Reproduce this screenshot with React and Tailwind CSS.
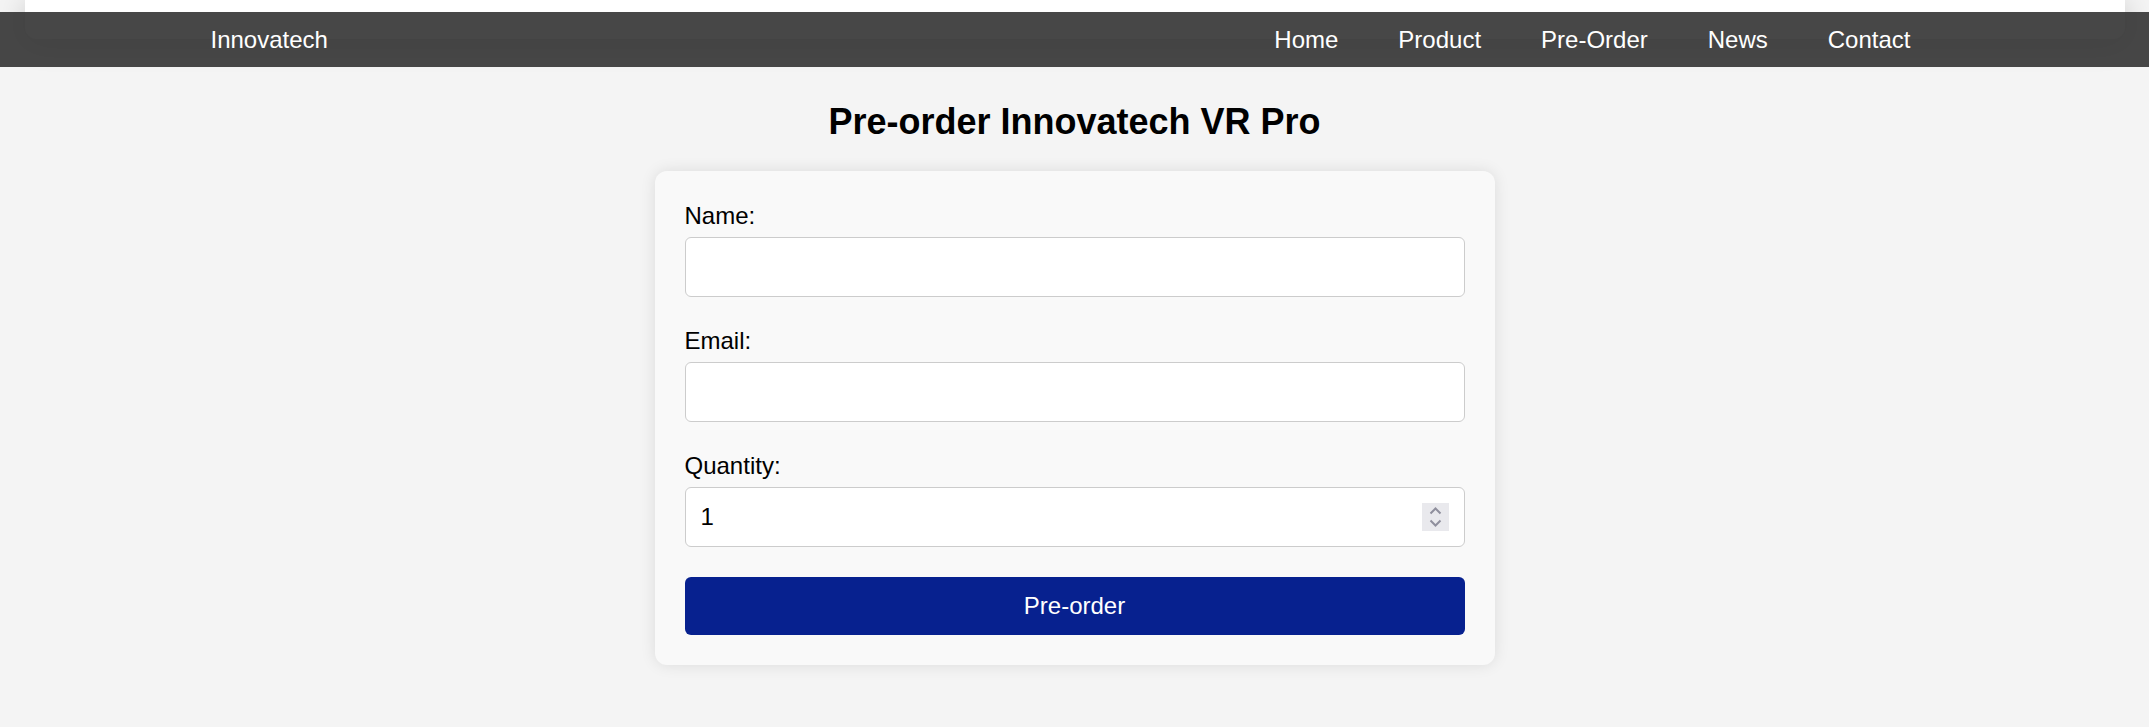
import React from "react";

export default function App() {
  const links = ["Home", "Product", "Pre-Order", "News", "Contact"];
  return (
    <div
      className="min-h-screen bg-[#f4f4f4] text-black leading-[1.15]"
      style={{ fontFamily: '"Liberation Sans", Arial, sans-serif' }}
    >
      <div className="mx-auto w-[2100px] h-[39px] bg-white rounded-b-[12px] shadow-[0_4px_30px_rgba(0,0,0,0.2)]" />
      <nav className="relative z-10 -mt-[27px] bg-[rgba(51,51,51,0.9)] py-[13.5px] text-white text-[24px] leading-[27.6px]">
        <div className="mx-auto max-w-[1800px] pl-[36px] pr-[64px] flex items-center justify-between">
          <span>Innovatech</span>
          <ul className="flex gap-[60px]">
            {links.map((l) => (
              <li key={l}>
                <a href="#">{l}</a>
              </li>
            ))}
          </ul>
        </div>
      </nav>
      <h2 className="mt-[34px] mb-[29px] text-center text-[36px] leading-[41px] font-bold">
        Pre-order Innovatech VR Pro
      </h2>
      <form
        className="mx-auto w-[840px] bg-[#f9f9f9] rounded-[12px] px-[30px] pt-[31px] pb-[30px] shadow-[0_0_15px_rgba(0,0,0,0.1)] text-[24px]"
        onSubmit={(e) => e.preventDefault()}
      >
        <div className="mb-[30px]">
          <label className="block mb-[7px] leading-[28px]">Name:</label>
          <input
            type="text"
            className="block w-full h-[60px] px-[15px] bg-white border border-[#cccccc] rounded-[6px] outline-none"
          />
        </div>
        <div className="mb-[30px]">
          <label className="block mb-[7px] leading-[28px]">Email:</label>
          <input
            type="email"
            className="block w-full h-[60px] px-[15px] bg-white border border-[#cccccc] rounded-[6px] outline-none"
          />
        </div>
        <div className="mb-[30px]">
          <label className="block mb-[7px] leading-[28px]">Quantity:</label>
          <div className="relative">
            <input
              type="text"
              readOnly
              value="1"
              className="block w-full h-[60px] px-[15px] bg-white border border-[#cccccc] rounded-[6px] outline-none"
            />
            <div className="absolute right-[16px] top-[16px] w-[27px] h-[28px] bg-[#e9e9ed] flex items-center justify-center">
              <svg width="27" height="28" viewBox="0 0 27 28" fill="none">
                <path d="M8.5 10.5 L13.5 5.5 L18.5 10.5" stroke="#8f8f9d" strokeWidth="2" />
                <path d="M8.5 17.5 L13.5 22.5 L18.5 17.5" stroke="#8f8f9d" strokeWidth="2" />
              </svg>
            </div>
          </div>
        </div>
        <button
          type="submit"
          className="block w-full h-[58px] bg-[#07218f] text-white rounded-[6px] text-[24px]"
        >
          Pre-order
        </button>
      </form>
    </div>
  );
}
